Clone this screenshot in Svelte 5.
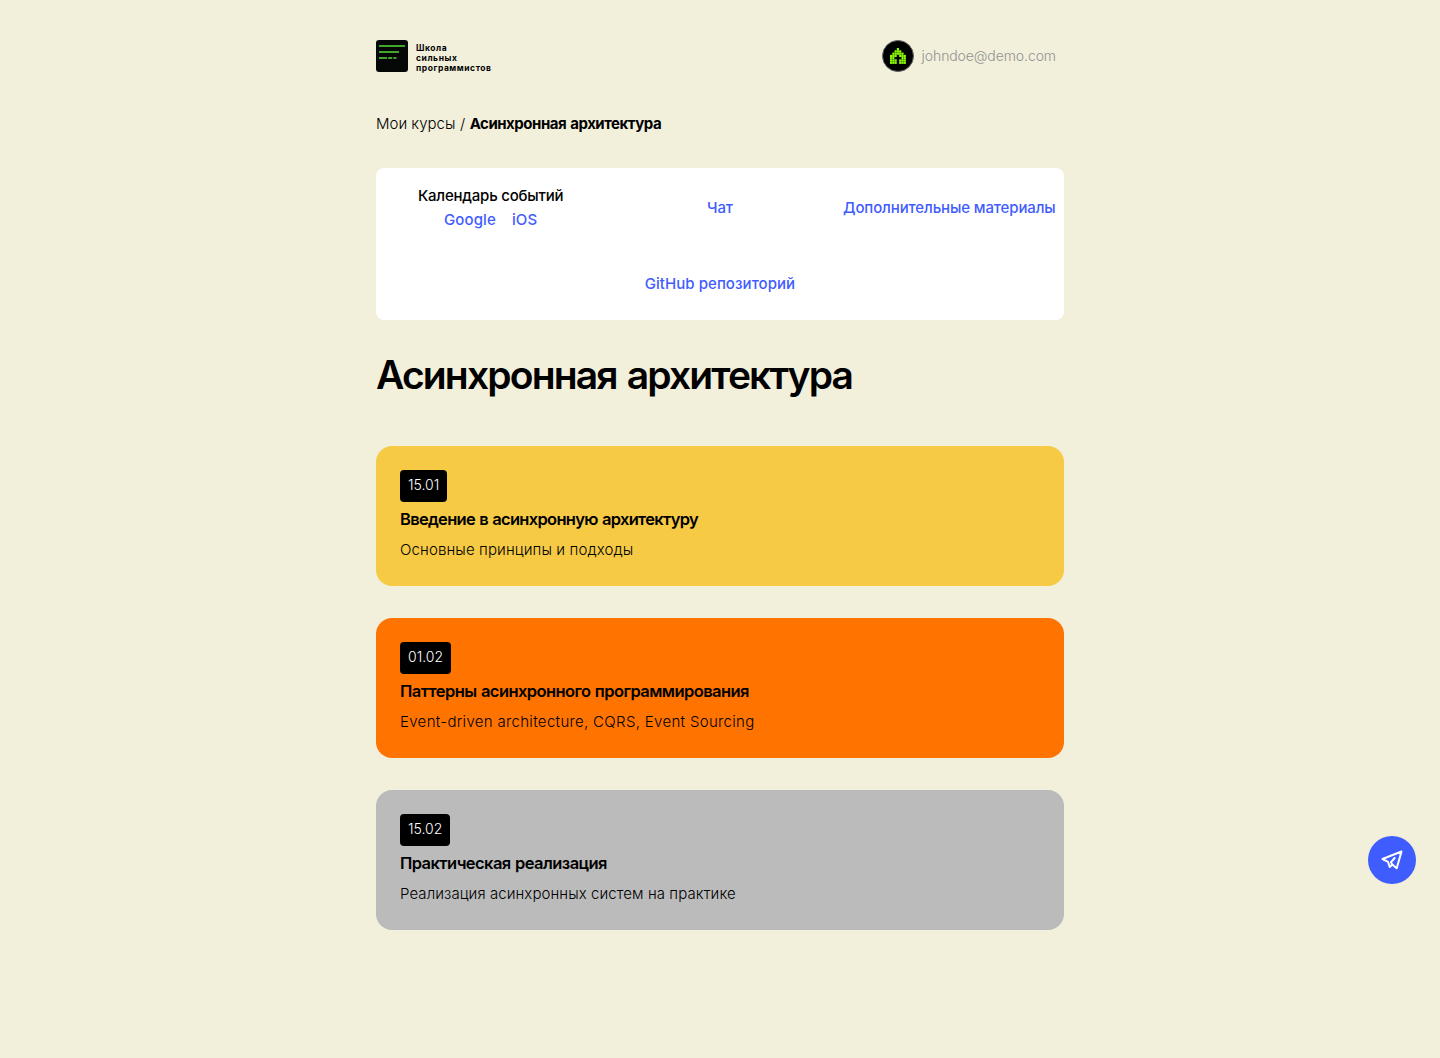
<script>
  const lessons = [
    { date: '15.01', title: 'Введение в асинхронную архитектуру', text: 'Основные принципы и подходы', tone: 'yellow' },
    { date: '01.02', title: 'Паттерны асинхронного программирования', text: 'Event-driven architecture, CQRS, Event Sourcing', tone: 'orange' },
    { date: '15.02', title: 'Практическая реализация', text: 'Реализация асинхронных систем на практике', tone: 'gray' }
  ];

  const house = ['...#...', '..###..', '.#####.', '###.###', '##...##', '###.###', '###.###'];
</script>

<main class="page">
  <header class="header">
    <a class="logo" href="#home" aria-label="Школа сильных программистов">
      <svg width="32" height="32" viewBox="0 0 32 32">
        <rect width="32" height="32" rx="3" fill="#050807" />
        <path d="M3 6h26M3 12h20M3 18h8M12.2 18h4M17.4 18h3" stroke="#41a62a" stroke-width="2" />
      </svg>
      <span class="words"><span>Школа</span><span>сильных</span><span>программистов</span></span>
    </a>
    <div class="user">
      <svg width="32" height="32" viewBox="0 0 32 32">
        <circle cx="16" cy="16" r="15.5" fill="#000" stroke="#666" />
        {#each house as row, y}
          {#each row as cell, x}
            {#if cell === '#'}
              <rect x={8 + x * 2.28} y={8 + y * 2.28} width="2.2" height="2.2" fill="#90ff00" />
            {/if}
          {/each}
        {/each}
      </svg>
      <span class="email">johndoe@demo.com</span>
    </div>
  </header>

  <nav class="crumbs"><a href="#courses">Мои курсы</a><span class="slash">/</span><b>Асинхронная архитектура</b></nav>

  <section class="links">
    <div class="calendar">
      <span>Календарь событий</span>
      <div class="apps"><a href="#google">Google</a><a href="#ios">iOS</a></div>
    </div>
    <a class="link" href="#chat">Чат</a>
    <a class="link" href="#more">Дополнительные материалы</a>
    <a class="link latin" href="#github">GitHub репозиторий</a>
  </section>

  <h1>Асинхронная архитектура</h1>

  <div class="lessons">
    {#each lessons as lesson}
      <article class="card {lesson.tone}">
        <time>{lesson.date}</time>
        <h2>{lesson.title}</h2>
        <p>{lesson.text}</p>
      </article>
    {/each}
  </div>
</main>

<a class="fab" href="#telegram" aria-label="Telegram">
  <svg width="24" height="24" viewBox="0 0 24 24" fill="none" stroke="#fff" stroke-width="2" stroke-linejoin="round" stroke-linecap="round">
    <path d="M21.5 3.5 2.5 11 8 13.8 9.7 19 12.3 16.5 16.7 20.3ZM14.7 10 11 14.2l1.3 2.3" />
  </svg>
</a>

<style>
  :global(body) { background: #f2efdb; }
  .page { box-sizing: border-box; width: 688px; min-height: 1058px; margin: 0 auto; padding-top: 40px; font: 300 15px/24px Inter, sans-serif; color: #000; }
  a { color: inherit; text-decoration: none; }
  svg { display: block; }
  .header { display: flex; justify-content: space-between; height: 32px; padding-right: 8px; }
  .logo, .user { display: flex; align-items: center; gap: 8px; }
  .words { display: flex; flex-direction: column; align-items: flex-start; font: 700 8.5px/10px Inter, sans-serif; letter-spacing: 0.55px; padding-top: 3px; }
  .email { font-size: 14px; color: #929292; letter-spacing: -0.09px; }
  .crumbs { display: flex; margin-top: 40px; white-space: nowrap; }
  .slash { margin: 0 4.5px; }
  .crumbs b { font-weight: 700; letter-spacing: -0.47px; word-spacing: 0.9px; }
  .links { display: flex; flex-wrap: wrap; justify-content: center; align-items: center; margin-top: 32px; border-radius: 8px; background: #fff; font-weight: 500; text-align: center; letter-spacing: -0.13px; }
  .calendar, .link { box-sizing: border-box; width: 33.333%; }
  .calendar { padding: 16px 0; letter-spacing: -0.2px; }
  .apps { display: flex; justify-content: center; gap: 16px; letter-spacing: 0.12px; }
  .latin { letter-spacing: 0.05px; }
  .links a { color: #3f5cff; }
  .link { padding: 24px 0; white-space: nowrap; }
  h1 { margin: 31px 0 47px; font-size: 39px; line-height: 48px; font-weight: 600; white-space: nowrap; letter-spacing: -1.84px; word-spacing: 2px; }
  .lessons { display: grid; gap: 32px; }
  .card { box-sizing: border-box; height: 140px; padding: 24px; border-radius: 16px; }
  .yellow { background: #f6ca45; }
  .orange { background: #ff7400; }
  .gray { background: #bbb; }
  time { display: block; width: max-content; padding: 0 8px 2px; border-radius: 4px; background: #000; color: #fff; font-size: 14px; line-height: 30px; }
  h2 { margin: 4px 0; font-size: 16.5px; line-height: 27px; font-weight: 600; letter-spacing: -0.57px; word-spacing: 0.8px; }
  .yellow h2 { letter-spacing: -0.7px; }
  p { margin: 0; padding-top: 1px; letter-spacing: 0.12px; }
  .orange p { letter-spacing: 0.32px; }
  .gray p { letter-spacing: 0.08px; }
  .fab { position: fixed; right: 24px; bottom: 174px; display: grid; place-items: center; width: 48px; height: 48px; border-radius: 50%; background: #3f5cff; }
</style>
